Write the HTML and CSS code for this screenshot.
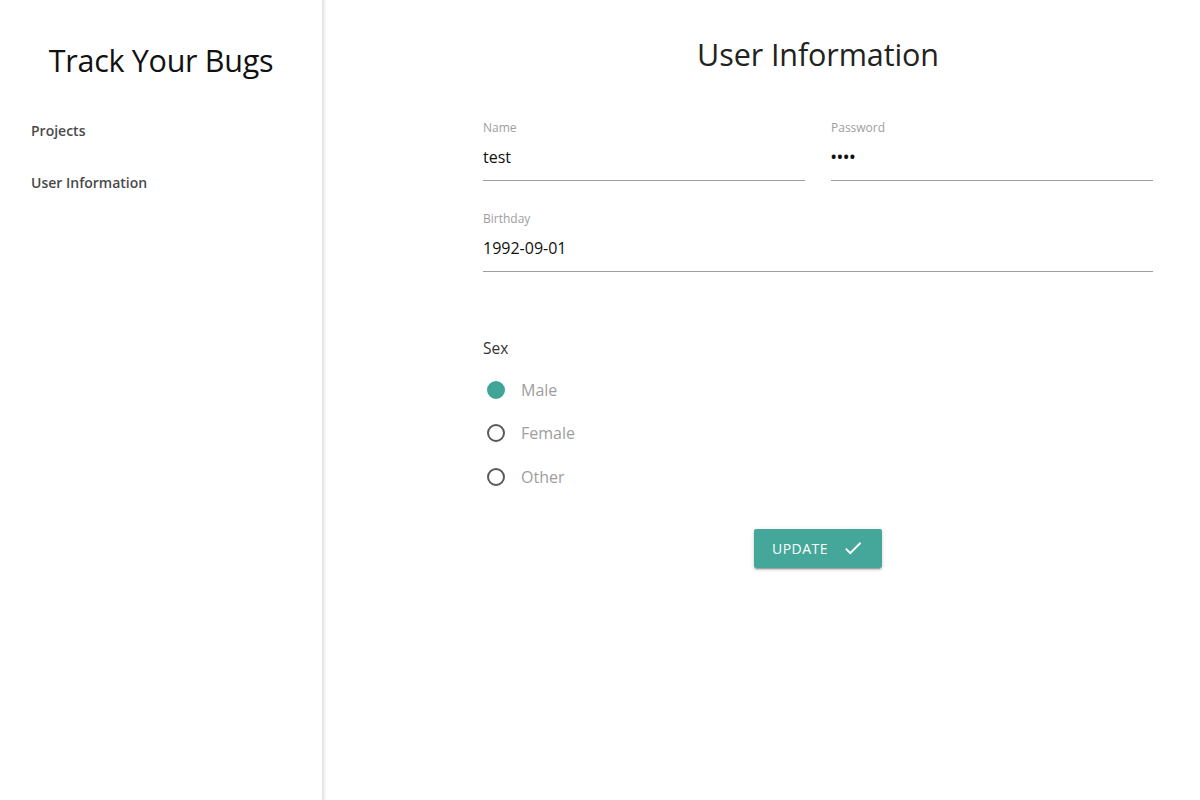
FILE: index.html
```html
<!DOCTYPE html>
<html lang="en">
<head>
<meta charset="utf-8">
<title>Track Your Bugs</title>
<link rel="stylesheet" href="styles.css">
</head>
<body>
<div class="layout">
  <aside class="sidenav">
    <h1 class="brand">Track Your Bugs</h1>
    <nav class="nav">
      <a class="nav-item" href="#">Projects</a>
      <a class="nav-item" href="#">User Information</a>
    </nav>
  </aside>
  <main class="main">
    <div class="content">
      <h2 class="page-title">User Information</h2>
      <div class="row">
        <div class="field">
          <label class="field-label">Name</label>
          <div class="field-value">test</div>
        </div>
        <div class="field">
          <label class="field-label">Password</label>
          <div class="field-value password">••••</div>
        </div>
      </div>
      <div class="row">
        <div class="field">
          <label class="field-label">Birthday</label>
          <div class="field-value">1992-09-01</div>
        </div>
      </div>
      <div class="sex">
        <div class="sex-label">Sex</div>
        <div class="radio"><span class="radio-circle checked"></span><span class="radio-text">Male</span></div>
        <div class="radio"><span class="radio-circle"></span><span class="radio-text">Female</span></div>
        <div class="radio"><span class="radio-circle"></span><span class="radio-text">Other</span></div>
      </div>
      <div class="actions">
        <button class="btn">UPDATE
          <svg class="btn-icon" viewBox="0 0 24 24" width="22" height="22"><path d="M9 16.17L4.83 12l-1.42 1.41L9 19 21 7l-1.41-1.41z" fill="#fff"/></svg>
        </button>
      </div>
    </div>
  </main>
</div>
</body>
</html>
```

FILE: styles.css
```css
html, body {
  margin: 0;
  padding: 0;
  background: #fff;
  font-family: "Open Sans", "Noto Sans", sans-serif;
  color: rgba(0,0,0,0.87);
}

.layout {
  display: flex;
  height: 800px;
}

.sidenav {
  width: 324px;
  flex: none;
  border-right: 2px solid #e6e6e6;
  box-shadow: 1px 0 3px rgba(0,0,0,0.08);
  box-sizing: border-box;
}

.brand {
  margin: 0;
  padding-top: 40px;
  text-align: center;
  font-weight: 400;
  font-size: 30.5px;
  line-height: 40px;
  color: #111;
  letter-spacing: -0.3px;
}

.nav {
  display: flex;
  flex-direction: column;
  padding-top: 35px;
}

.nav-item {
  display: block;
  padding: 0 31px;
  height: 52px;
  line-height: 32px;
  font-size: 14px;
  font-weight: 600;
  color: #4a4a4a;
  text-decoration: none;
}

.main {
  flex: 1;
  display: flex;
  padding-left: 159px;
  padding-right: 47px;
}

.content {
  width: 670px;
}

.page-title {
  margin: 0;
  padding-top: 34px;
  text-align: center;
  font-weight: 400;
  font-size: 30.5px;
  line-height: 40px;
  color: #222;
  letter-spacing: -0.1px;
}

.row {
  display: flex;
  gap: 26px;
  margin-top: 36px;
}

.row + .row {
  margin-top: 0;
}

.field {
  flex: 1;
  padding-top: 10px;
  height: 91px;
  box-sizing: border-box;
}

.field-label {
  display: block;
  font-size: 12px;
  line-height: 16px;
  color: #9e9e9e;
}

.field-value {
  font-size: 16px;
  line-height: 30px;
  margin-top: 6px;
  border-bottom: 1px solid #9e9e9e;
  padding-bottom: 8px;
  color: #111;
}

.field-value.password {
  letter-spacing: 1px;
  font-size: 14px;
  font-weight: 700;
}

.sex {
  margin-top: 46px;
}

.sex-label {
  font-size: 15.5px;
  line-height: 20px;
  color: #333;
  margin-bottom: 10px;
}

.radio {
  display: flex;
  align-items: center;
  height: 43.5px;
}

.radio-circle {
  width: 14px;
  height: 14px;
  border: 2px solid #5a5a5a;
  border-radius: 50%;
  margin-left: 4px;
  margin-right: 16px;
}

.radio-circle.checked {
  border-color: #3fa597;
  background: #3fa597;
}

.radio-text {
  font-size: 16px;
  color: #9e9e9e;
}

.actions {
  display: flex;
  justify-content: center;
  margin-top: 30px;
}

.btn {
  display: flex;
  align-items: center;
  gap: 14px;
  height: 39px;
  padding: 0 18px;
  border: none;
  border-radius: 2px;
  background: #44a79a;
  color: #fff;
  font-family: inherit;
  font-size: 14px;
  letter-spacing: 0.5px;
  box-shadow: 0 2px 2px 0 rgba(0,0,0,0.14), 0 1px 5px 0 rgba(0,0,0,0.12), 0 3px 1px -2px rgba(0,0,0,0.2);
}

.btn-icon {
  display: block;
}
```
